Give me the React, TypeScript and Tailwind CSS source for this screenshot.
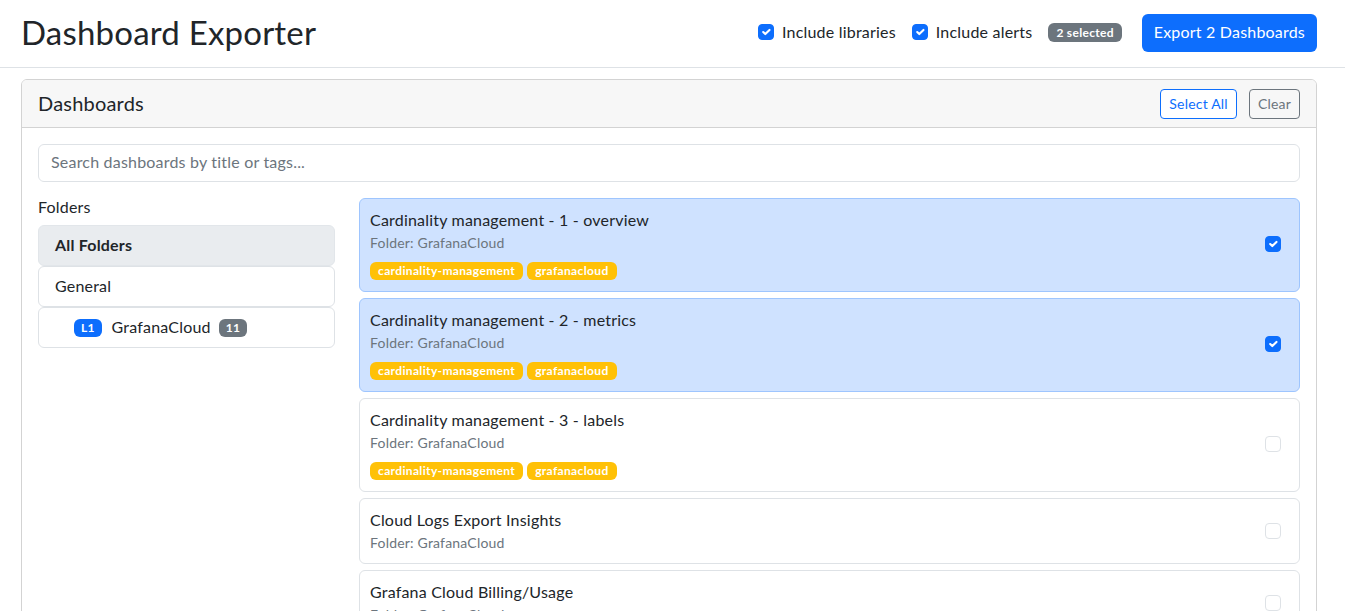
import React from "react";

const FONT = { fontFamily: "Lato, 'Open Sans', sans-serif" };

function Check({ checked }: { checked: boolean }) {
  return checked ? (
    <span className="w-4 h-4 rounded-[4px] bg-[#0d6efd] border border-[#0d6efd] flex items-center justify-center shrink-0">
      <svg viewBox="0 0 20 20" className="w-4 h-4">
        <path d="m6 10 3 3 6-6" fill="none" stroke="#fff" strokeWidth="3" strokeLinecap="round" strokeLinejoin="round" />
      </svg>
    </span>
  ) : (
    <span className="w-4 h-4 rounded-[4px] bg-white border border-[#dee2e6] shrink-0" />
  );
}

type Dash = { title: string; selected: boolean; tags: string[] };

const dashboards: Dash[] = [
  { title: "Cardinality management - 1 - overview", selected: true, tags: ["cardinality-management", "grafanacloud"] },
  { title: "Cardinality management - 2 - metrics", selected: true, tags: ["cardinality-management", "grafanacloud"] },
  { title: "Cardinality management - 3 - labels", selected: false, tags: ["cardinality-management", "grafanacloud"] },
  { title: "Cloud Logs Export Insights", selected: false, tags: [] },
  { title: "Grafana Cloud Billing/Usage", selected: false, tags: [] },
  { title: "Grafana Cloud Usage Insights", selected: false, tags: [] },
];

export default function App() {
  return (
    <div className="bg-white text-[#212529] min-h-screen tracking-[0.2px]" style={FONT}>
      <header className="h-[68px] border-b border-[#dee2e6] flex items-center justify-between pl-[21px] pr-[28px]">
        <h1 className="text-[33px] leading-none font-normal -mt-[3px]">Dashboard Exporter</h1>
        <div className="flex items-center">
          <label className="flex items-center gap-2 text-base -mt-[4px]">
            <Check checked />
            <span>Include libraries</span>
          </label>
          <label className="flex items-center gap-2 text-base ml-4 -mt-[4px]">
            <Check checked />
            <span>Include alerts</span>
          </label>
          <span className="ml-4 -mt-[2px] h-[19px] px-2 rounded-[6px] bg-[#6c757d] text-white text-[12px] font-bold flex items-center tracking-[0.3px]">
            2 selected
          </span>
          <button className="ml-5 -mt-[1px] h-[38px] px-3 rounded-[6px] bg-[#0d6efd] text-white text-base pb-[2px]">
            Export 2 Dashboards
          </button>
        </div>
      </header>

      <main className="pl-[21px] pr-[28px] pt-[11px]">
        <div className="border border-[#d3d3d3] rounded-[6px] overflow-hidden">
          <div className="bg-[#f7f7f7] border-b border-[#d3d3d3] h-[48px] px-4 flex items-center justify-between">
            <h5 className="text-[20px] leading-tight">Dashboards</h5>
            <div className="flex items-center gap-3">
              <button className="h-[30px] px-2 rounded-[4px] border border-[#0d6efd] text-[#0d6efd] text-sm bg-white">
                Select All
              </button>
              <button className="h-[30px] px-2 rounded-[4px] border border-[#6c757d] text-[#6c757d] text-sm">
                Clear
              </button>
            </div>
          </div>
          <div className="p-4">
            <div className="h-[38px] border border-[#dee2e6] rounded-[6px] px-3 flex items-center text-base text-[#6c757d] pb-[2px]">
              Search dashboards by title or tags...
            </div>
            <div className="mt-4 grid grid-cols-[297px_1fr] gap-6">
              <div>
                <div className="text-base leading-[18px] mb-[9px]">Folders</div>
                <div className="flex flex-col">
                  <div className="h-[41px] px-4 pb-[2px] flex items-center rounded-[6px] bg-[#e9ecef] border border-[#e2e6ea] font-bold">
                    All Folders
                  </div>
                  <div className="h-[41px] px-4 pb-[2px] flex items-center rounded-[6px] border border-[#dee2e6]">General</div>
                  <div className="h-[41px] pl-[35px] pr-4 flex items-center rounded-[6px] border border-[#dee2e6]">
                    <span className="h-[18px] px-[7px] rounded-[6px] bg-[#0d6efd] text-white text-[12px] font-bold flex items-center">
                      L1
                    </span>
                    <span className="ml-[10px] -mt-[2px]">GrafanaCloud</span>
                    <span className="ml-2 h-[18px] px-[7px] rounded-[6px] bg-[#6c757d] text-white text-[12px] font-bold flex items-center">
                      11
                    </span>
                  </div>
                </div>
              </div>
              <div className="flex flex-col gap-[6px]">
                {dashboards.map((d) => (
                  <div
                    key={d.title}
                    className={
                      "rounded-[6px] border pl-[10px] pr-[18px] flex items-center justify-between " +
                      (d.tags.length > 0 ? "pt-[9px] pb-[11px] " : "pt-[9px] pb-[10px] ") +
                      (d.selected ? "bg-[#cfe2ff] border-[#9ec5fe]" : "bg-white border-[#dee2e6]")
                    }
                  >
                    <div>
                      <div className="text-base leading-6">{d.title}</div>
                      <div className="text-sm leading-[21px] text-[#6c757d]">Folder: GrafanaCloud</div>
                      {d.tags.length > 0 && (
                        <div className="flex gap-1 mt-[9px]">
                          {d.tags.map((t) => (
                            <span
                              key={t}
                              className="h-[18px] px-2 rounded-[6px] bg-[#ffc107] text-white text-[12px] font-bold flex items-center tracking-[0.35px]"
                            >
                              {t}
                            </span>
                          ))}
                        </div>
                      )}
                    </div>
                    <Check checked={d.selected} />
                  </div>
                ))}
              </div>
            </div>
          </div>
        </div>
      </main>
    </div>
  );
}
